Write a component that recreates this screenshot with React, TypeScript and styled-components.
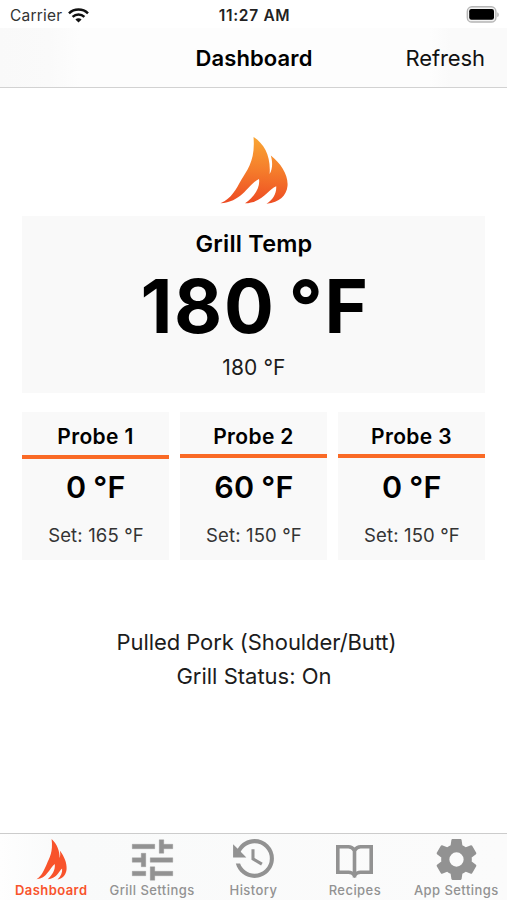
import React from 'react';
import styled, { createGlobalStyle } from 'styled-components';

const GlobalStyle = createGlobalStyle`
  * { box-sizing: border-box; }
  body {
    margin: 0;
    background: #fff;
    font-family: Inter, "Liberation Sans", sans-serif;
    color: #000;
  }
`;

const Screen = styled.div`
  display: flex;
  flex-direction: column;
  width: 507px;
  height: 900px;
  overflow: hidden;
  background: #fff;
`;

const StatusBar = styled.header`
  display: grid;
  grid-template-columns: 1fr auto 1fr;
  align-items: center;
  height: 28px;
  padding: 2px 8px 0 10px;
`;

const Carrier = styled.div`
  display: flex;
  align-items: center;
  gap: 6px;
  padding-top: 1px;
  font-size: 15.5px;
  line-height: 20px;
  letter-spacing: 0.2px;
  color: #333;
`;

const Clock = styled.div`
  padding-top: 1px;
  font-size: 15.5px;
  line-height: 20px;
  font-weight: 600;
  letter-spacing: 0.7px;
  color: #222;
`;

const BatterySlot = styled.div`
  display: flex;
  justify-content: flex-end;
  margin-top: -1px;
`;

const NavBar = styled.nav`
  display: grid;
  grid-template-columns: 1fr auto 1fr;
  align-items: center;
  height: 60px;
  padding: 0 22px;
  background: linear-gradient(90deg, #f9f9f9 0, #fafafa 50px, #fdfdfd 80px, #fdfdfd 430px, #fafafa 450px);
  border-bottom: 1px solid #d2d2d2;
`;

const NavTitle = styled.h1`
  grid-column: 2;
  margin: 0;
  padding-left: 1px;
  font-size: 22px;
  line-height: 28px;
  font-weight: 600;
  letter-spacing: 0.1px;
`;

const NavAction = styled.button`
  justify-self: end;
  padding: 0;
  border: 0;
  background: none;
  font: 400 22px/28px Inter, "Liberation Sans", sans-serif;
  letter-spacing: -0.1px;
  color: #111;
`;

const Content = styled.main`
  display: flex;
  flex: 1;
  flex-direction: column;
  padding: 48px 22px 0;
`;

const Logo = styled.svg`
  display: block;
  align-self: center;
  width: 70px;
  height: 70px;
`;

const GrillCard = styled.section`
  display: flex;
  flex-direction: column;
  align-items: center;
  height: 177px;
  margin-top: 10px;
  padding: 13px 0 0 1px;
  background: #f9f9f9;
`;

const CardTitle = styled.h2`
  margin: 0;
  font-size: 23.5px;
  line-height: 30px;
  font-weight: 600;
  letter-spacing: 0.2px;
`;

const GrillValue = styled.div`
  margin-top: 4px;
  padding-left: 2px;
  font-size: 74px;
  line-height: 86px;
  font-weight: 700;
  letter-spacing: 1.7px;
  word-spacing: -6px;
`;

const GrillTarget = styled.div`
  margin-top: 5px;
  font-size: 21px;
  line-height: 28px;
  letter-spacing: 0.1px;
  color: #1c1c1c;
`;

const ProbeGrid = styled.section`
  display: grid;
  grid-template-columns: repeat(3, 1fr);
  gap: 11px;
  margin-top: 19px;
`;

const ProbeCard = styled.article`
  display: flex;
  flex-direction: column;
  align-items: center;
  height: 148px;
  background: #f9f9f9;
`;

const ProbeName = styled.h3<{ $drop: number }>`
  width: 100%;
  height: ${(p) => 46 + p.$drop}px;
  margin: 0;
  padding-top: 11px;
  border-bottom: 4px solid #fa6a26;
  font-size: 21px;
  line-height: 28px;
  font-weight: 600;
  letter-spacing: 0.35px;
  text-align: center;
`;

const ProbeValue = styled.div<{ $drop: number }>`
  margin-top: ${(p) => 11 - p.$drop}px;
  padding-left: 1px;
  font-size: 30.5px;
  line-height: 36px;
  font-weight: 600;
  letter-spacing: 0.4px;
  word-spacing: -1.5px;
`;

const ProbeTarget = styled.div`
  margin-top: 18px;
  padding-left: 1px;
  font-size: 18.5px;
  line-height: 24px;
  letter-spacing: 0.15px;
  color: #333;
`;

const Summary = styled.section`
  display: flex;
  flex-direction: column;
  align-items: center;
  margin-top: 65px;
  font-size: 22px;
  line-height: 34px;
  color: #1c1c1c;
`;

const SummaryLine = styled.div<{ $tracking?: number; $indent?: number }>`
  padding-left: ${(p) => p.$indent ?? 0}px;
  letter-spacing: ${(p) => p.$tracking ?? 0}px;
`;

const TabBar = styled.footer`
  display: grid;
  grid-template-columns: repeat(5, 1fr);
  height: 67px;
  border-top: 1px solid #ccc;
  background: linear-gradient(90deg, #fefefe, #f9fafa 60px, #fbfbfb);
`;

const Tab = styled.a<{ $active?: boolean }>`
  display: flex;
  flex-direction: column;
  align-items: center;
  color: ${(p) => (p.$active ? '#f8532b' : '#929292')};
`;

const TabIcon = styled.span`
  display: flex;
  align-items: center;
  justify-content: center;
  height: 46px;
  padding-top: 5px;
  color: inherit;
`;

const TabLabel = styled.span<{ $bold?: boolean }>`
  margin-top: 1px;
  padding-left: ${(p) => (p.$bold ? 1 : 0)}px;
  font-size: 13px;
  line-height: 18px;
  font-weight: ${(p) => (p.$bold ? 600 : 500)};
  letter-spacing: 0.45px;
  white-space: nowrap;
`;

const WifiIcon = () => (
  <svg width="21" height="15" viewBox="0 0 21 15" fill="none" stroke="#111" strokeWidth="2.5">
    <path d="M1 5.3C6.2.2 14.8.2 20 5.3" />
    <path d="M4.6 8.9C8 5.7 13 5.7 16.4 8.9" />
    <path d="M10.5 14.6 7.4 11.5C9.2 9.8 11.8 9.8 13.6 11.5Z" fill="#111" stroke="none" />
  </svg>
);

const BatteryIcon = () => (
  <svg width="33" height="17" viewBox="0 0 33 17">
    <rect x="1.3" y="0.8" width="28.6" height="15.2" rx="4.6" fill="#f3f3f3" stroke="#b5b5b5" strokeWidth="1.4" />
    <rect x="3.2" y="3" width="24.8" height="10.8" rx="2.2" fill="#000" />
    <path d="M31.4 6.2c1.7.7 1.7 4.2 0 4.9z" fill="#aaa" />
  </svg>
);

const FlameLogo = () => (
  <Logo viewBox="0 0 70 70">
    <defs>
      <linearGradient id="flame" x1="0.55" y1="0" x2="0.5" y2="1">
        <stop offset="0" stopColor="#f9a634" />
        <stop offset="0.5" stopColor="#f57c2b" />
        <stop offset="1" stopColor="#ed4b23" />
      </linearGradient>
    </defs>
    <path
      fill="url(#flame)"
      d="M34.5 1C45.5 8 52 20.5 50.6 38C53.4 33.5 54 26.5 51.8 19.5C62 27.5 69.5 39 68.5 50C67.5 59.5 60.5 66.5 47.5 67.8C54 63.5 57.7 57.5 57.2 50.2C49 53.5 44 66.5 26 67.3C34 62 41.5 52.5 40 43C29.5 47.5 23.5 66 1.5 67.3C13 62 16.5 54 22.5 43.5C28.5 33.5 36.5 24 34.5 1Z"
    />
  </Logo>
);

const SmallFlame = () => (
  <svg width="33" height="41" viewBox="-2 0 33 41" fill="currentColor">
    <path d="M15.6 0C21 5 23.8 12 23.6 19C24.5 16.5 24.4 14 23.8 11.5C28.3 17.5 31 24 30.6 30C30.2 35.5 27 39.8 21.5 40.4C25 37.5 26.5 33.5 26.1 29.5C22.5 32.5 20.5 40 11.7 40.2C16 36.5 19.5 31 18.8 25C13.5 29 11 39.5.5 40.3C6.5 36 8 31 10.8 25C13.5 18.5 17.2 13 15.6 0Z" />
  </svg>
);

const TuneIcon = () => (
  <svg width="55" height="54" viewBox="0 0 24 24" fill="currentColor">
    <path d="M3 17v2h6v-2H3zM3 5v2h10V5H3zm10 16v-2h8v-2h-8v-2h-2v6h2zM7 9v2H3v2h4v2h2V9H7zm14 4v-2H11v2h10zm-6-4h2V7h4V5h-4V3h-2v6z" stroke="currentColor" strokeWidth="0.15" />
  </svg>
);

const HistoryIcon = () => (
  <svg width="49" height="49" viewBox="0 0 24 24" fill="currentColor">
    <path d="M11,7V12.11L15.71,14.9L16.5,13.62L12.5,11.25V7M12.5,2C8.97,2 5.91,3.92 4.27,6.77L2,4.5V11H8.5L5.75,8.25C6.96,5.73 9.5,4 12.5,4A7.5,7.5 0 0,1 20,11.5A7.5,7.5 0 0,1 12.5,19C9.23,19 6.47,16.91 5.44,14H3.34C4.44,18.03 8.11,21 12.5,21C17.74,21 22,16.75 22,11.5A9.5,9.5 0 0,0 12.5,2Z" />
  </svg>
);

const BookIcon = () => (
  <svg width="37" height="36" viewBox="0 -3 37 36" fill="none" stroke="currentColor" strokeWidth="3.6">
    <path d="M1.8 1.8H12.5C16 1.8 17.2 3.5 18.5 5.2C19.8 3.5 21 1.8 24.5 1.8H35.2V27.2H24.5C21 27.2 19.8 28.6 18.5 30.2C17.2 28.6 16 27.2 12.5 27.2H1.8Z" />
    <path d="M18.5 5V32.5" />
  </svg>
);

const GearIcon = () => (
  <svg width="49" height="49" viewBox="0 0 24 24" fill="currentColor">
    <path d="M12,15.5A3.5,3.5 0 0,1 8.5,12A3.5,3.5 0 0,1 12,8.5A3.5,3.5 0 0,1 15.5,12A3.5,3.5 0 0,1 12,15.5M19.43,12.97C19.47,12.65 19.5,12.33 19.5,12C19.5,11.67 19.47,11.34 19.43,11L21.54,9.37C21.73,9.22 21.78,8.95 21.66,8.73L19.66,5.27C19.54,5.05 19.27,4.96 19.05,5.05L16.56,6.05C16.04,5.66 15.5,5.32 14.87,5.07L14.5,2.42C14.46,2.18 14.25,2 14,2H10C9.75,2 9.54,2.18 9.5,2.42L9.13,5.07C8.5,5.32 7.96,5.66 7.44,6.05L4.95,5.05C4.73,4.96 4.46,5.05 4.34,5.27L2.34,8.73C2.21,8.95 2.27,9.22 2.46,9.37L4.57,11C4.53,11.34 4.5,11.67 4.5,12C4.5,12.33 4.53,12.65 4.57,12.97L2.46,14.63C2.27,14.78 2.21,15.05 2.34,15.27L4.34,18.73C4.46,18.95 4.73,19.03 4.95,18.95L7.44,17.94C7.96,18.34 8.5,18.68 9.13,18.93L9.5,21.58C9.54,21.82 9.75,22 10,22H14C14.25,22 14.46,21.82 14.5,21.58L14.87,18.93C15.5,18.67 16.04,18.34 16.56,17.94L19.05,18.95C19.27,19.03 19.54,18.95 19.66,18.73L21.66,15.27C21.78,15.05 21.73,14.78 21.54,14.63L19.43,12.97Z" />
  </svg>
);

const probes = [
  { name: 'Probe 1', value: '0 °F', target: '165 °F', drop: 1 },
  { name: 'Probe 2', value: '60 °F', target: '150 °F', drop: 0 },
  { name: 'Probe 3', value: '0 °F', target: '150 °F', drop: 0 },
];

const tabs = [
  { label: 'Dashboard', Icon: SmallFlame, active: true },
  { label: 'Grill Settings', Icon: TuneIcon },
  { label: 'History', Icon: HistoryIcon },
  { label: 'Recipes', Icon: BookIcon },
  { label: 'App Settings', Icon: GearIcon },
];

export default function App() {
  return (
    <>
      <GlobalStyle />
      <Screen>
        <StatusBar>
          <Carrier>
            Carrier <WifiIcon />
          </Carrier>
          <Clock>11:27 AM</Clock>
          <BatterySlot>
            <BatteryIcon />
          </BatterySlot>
        </StatusBar>
        <NavBar>
          <NavTitle>Dashboard</NavTitle>
          <NavAction>Refresh</NavAction>
        </NavBar>
        <Content>
          <FlameLogo />
          <GrillCard>
            <CardTitle>Grill Temp</CardTitle>
            <GrillValue>180 °F</GrillValue>
            <GrillTarget>180 °F</GrillTarget>
          </GrillCard>
          <ProbeGrid>
            {probes.map((p) => (
              <ProbeCard key={p.name}>
                <ProbeName $drop={p.drop}>{p.name}</ProbeName>
                <ProbeValue $drop={p.drop}>{p.value}</ProbeValue>
                <ProbeTarget>Set: {p.target}</ProbeTarget>
              </ProbeCard>
            ))}
          </ProbeGrid>
          <Summary>
            <SummaryLine $tracking={-0.08} $indent={6}>Pulled Pork (Shoulder/Butt)</SummaryLine>
            <SummaryLine $indent={1}>Grill Status: On</SummaryLine>
          </Summary>
        </Content>
        <TabBar>
          {tabs.map(({ label, Icon, active }) => (
            <Tab key={label} $active={active}>
              <TabIcon>
                <Icon />
              </TabIcon>
              <TabLabel $bold={active}>{label}</TabLabel>
            </Tab>
          ))}
        </TabBar>
      </Screen>
    </>
  );
}
